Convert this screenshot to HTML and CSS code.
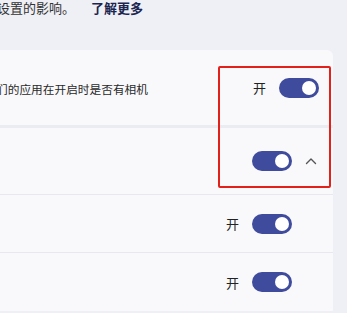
FILE: index.html
```html
<!DOCTYPE html>
<html lang="zh-CN">
<head>
<meta charset="utf-8">
<link rel="stylesheet" href="styles.css">
</head>
<body>
<div class="page">
  <p class="intro">设置的影响。<a class="learn">了解更多</a></p>
  <div class="card">
    <div class="row row-main">
      <span class="desc">们的应用在开启时是否有相机</span>
      <div class="ctrl">
        <span class="state">开</span>
        <span class="toggle"><span class="knob"></span></span>
      </div>
    </div>
    <div class="row row-group">
      <span class="desc"></span>
      <div class="ctrl">
        <span class="toggle"><span class="knob"></span></span>
        <svg class="chev" width="12" height="8" viewBox="0 0 12 8"><polyline points="1.5,6.5 6,2 10.5,6.5" fill="none" stroke="#555" stroke-width="1.4" stroke-linecap="round" stroke-linejoin="round"/></svg>
      </div>
    </div>
    <div class="row row-sub">
      <span class="desc"></span>
      <div class="ctrl">
        <span class="state">开</span>
        <span class="toggle"><span class="knob"></span></span>
      </div>
    </div>
    <div class="row row-sub last">
      <span class="desc"></span>
      <div class="ctrl">
        <span class="state">开</span>
        <span class="toggle"><span class="knob"></span></span>
      </div>
    </div>
  </div>
  <div class="highlight"></div>
</div>
</body>
</html>
```

FILE: styles.css
```css
* { box-sizing: border-box; }
html, body { margin: 0; padding: 0; }
body {
  background: #eef0f6;
  font-family: "Noto Sans CJK SC", "Noto Sans", sans-serif;
  color: #222;
  width: 347px;
  height: 313px;
  overflow: hidden;
}
.page { position: relative; width: 347px; height: 313px; }
.intro {
  margin: 0 0 0 -3px;
  font-size: 13px;
  line-height: 16px;
  color: #333;
  padding-top: 0;
  height: 50px;
}
.learn {
  margin-left: 16px;
  font-weight: 700;
  color: #1c2550;
}
.card {
  width: 333px;
  background: #f9f9fb;
  border-radius: 0 6px 0 0;
}
.row {
  display: flex;
  align-items: center;
  justify-content: space-between;
}
.row-main { height: 78px; border-bottom: 3px solid #eaecf1; }
.row-group { height: 67px; border-bottom: 1px solid #e7e9ee; }
.row-sub { height: 58px; border-bottom: 1px solid #e7e9ee; }
.row-sub.last { border-bottom: none; }
.desc {
  font-size: 11.7px;
  color: #2a2a2a;
  margin-left: -4px;
  padding-top: 2px;
}
.ctrl { display: flex; align-items: center; }
.row-main .ctrl { margin-right: 14px; }
.row-group .ctrl { margin-right: 16px; }
.row-sub .ctrl { margin-right: 41px; }
.state { font-size: 13px; color: #222; margin-right: 13px; }
.toggle {
  position: relative;
  display: block;
  width: 40px;
  height: 20px;
  border-radius: 10px;
  background: #3f4b9c;
}
.knob {
  position: absolute;
  right: 3px;
  top: 3px;
  width: 14px;
  height: 14px;
  border-radius: 50%;
  background: #fff;
}
.chev { display: block; margin-left: 13px; }
.highlight {
  position: absolute;
  left: 218px;
  top: 66px;
  width: 113px;
  height: 122px;
  border: 2px solid #e3211b;
  border-radius: 2px;
}
```
